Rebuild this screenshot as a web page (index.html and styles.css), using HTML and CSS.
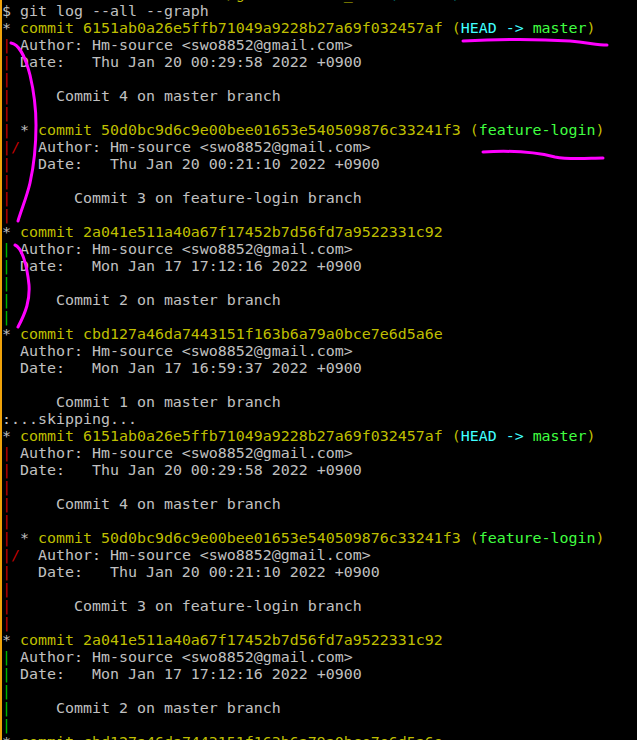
FILE: index.html
```html
<!DOCTYPE html>
<html>
<head>
<meta charset="utf-8">
<link rel="stylesheet" href="styles.css">
</head>
<body>
<div class="term">
<pre class="log"><span class="g">swo8852-DESKTOP</span> <span class="p">MINGW64</span> <span class="y">~/gitHm-source_tst</span> <span class="c">(master)</span>
$ git log --all --graph
* <span class="y">commit 6151ab0a26e5ffb71049a9228b27a69f032457af (<span class="bc">HEAD -&gt; </span><span class="bg">master</span>)</span>
<span class="r">|</span> Author: Hm-source &lt;swo8852@gmail.com&gt;
<span class="r">|</span> Date:   Thu Jan 20 00:29:58 2022 +0900
<span class="r">|</span>
<span class="r">|</span>     Commit 4 on master branch
<span class="r">|</span>
<span class="r">|</span> * <span class="y">commit 50d0bc9d6c9e00bee01653e540509876c33241f3 (<span class="bg">feature-login</span>)</span>
<span class="r">|/</span>  Author: Hm-source &lt;swo8852@gmail.com&gt;
<span class="r">|</span>   Date:   Thu Jan 20 00:21:10 2022 +0900
<span class="r">|</span>
<span class="r">|</span>       Commit 3 on feature-login branch
<span class="r">|</span>
* <span class="y">commit 2a041e511a40a67f17452b7d56fd7a9522331c92</span>
<span class="g">|</span> Author: Hm-source &lt;swo8852@gmail.com&gt;
<span class="g">|</span> Date:   Mon Jan 17 17:12:16 2022 +0900
<span class="g">|</span>
<span class="g">|</span>     Commit 2 on master branch
<span class="g">|</span>
* <span class="y">commit cbd127a46da7443151f163b6a79a0bce7e6d5a6e</span>
  Author: Hm-source &lt;swo8852@gmail.com&gt;
  Date:   Mon Jan 17 16:59:37 2022 +0900

      Commit 1 on master branch
:...skipping...
* <span class="y">commit 6151ab0a26e5ffb71049a9228b27a69f032457af (<span class="bc">HEAD -&gt; </span><span class="bg">master</span>)</span>
<span class="r">|</span> Author: Hm-source &lt;swo8852@gmail.com&gt;
<span class="r">|</span> Date:   Thu Jan 20 00:29:58 2022 +0900
<span class="r">|</span>
<span class="r">|</span>     Commit 4 on master branch
<span class="r">|</span>
<span class="r">|</span> * <span class="y">commit 50d0bc9d6c9e00bee01653e540509876c33241f3 (<span class="bg">feature-login</span>)</span>
<span class="r">|/</span>  Author: Hm-source &lt;swo8852@gmail.com&gt;
<span class="r">|</span>   Date:   Thu Jan 20 00:21:10 2022 +0900
<span class="r">|</span>
<span class="r">|</span>       Commit 3 on feature-login branch
<span class="r">|</span>
* <span class="y">commit 2a041e511a40a67f17452b7d56fd7a9522331c92</span>
<span class="g">|</span> Author: Hm-source &lt;swo8852@gmail.com&gt;
<span class="g">|</span> Date:   Mon Jan 17 17:12:16 2022 +0900
<span class="g">|</span>
<span class="g">|</span>     Commit 2 on master branch
<span class="g">|</span>
* <span class="y">commit cbd127a46da7443151f163b6a79a0bce7e6d5a6e</span>
  Author: Hm-source &lt;swo8852@gmail.com&gt;</pre>
<svg class="marks" width="637" height="740" viewBox="0 0 637 740">
<path d="M463,41 C500,39 540,39 570,41 C590,43 598,45 607,45"/>
<path d="M483,152 C515,150 535,152 555,157 C570,160 590,158 603,158"/>
<path d="M11,43 C18,44 25,55 30,75 C34,92 36,105 36,125 C36,145 34,165 30,183 C27,196 22,208 18,221"/>
<path d="M15,245 C22,248 27,265 29,285 C30,300 26,312 18,327"/>
</svg>
</div>
</body>
</html>
```
FILE: styles.css
```css
html, body {
  margin: 0;
  padding: 0;
  background: #000;
}

.term {
  position: relative;
  width: 635px;
  height: 740px;
  overflow: hidden;
  border-left: 2px solid #f0a30a;
  background: #000;
}

.log {
  margin: -14px 0 0 0;
  padding: 0;
  font-family: "DejaVu Sans Mono", "Liberation Mono", monospace;
  font-size: 14.95px;
  line-height: 17px;
  color: #c0c0c0;
  white-space: pre;
}

.y { color: #bfbf00; }
.r { color: #bf0000; }
.g { color: #00bf00; }
.c { color: #00bfbf; }
.p { color: #bf00bf; }
.bc { color: #40ffff; }
.bg { color: #40ff40; }

.marks {
  position: absolute;
  left: -2px;
  top: 0;
  pointer-events: none;
}

.marks path {
  fill: none;
  stroke: #ff00ff;
  stroke-width: 3;
  stroke-linecap: round;
  stroke-linejoin: round;
}
```
